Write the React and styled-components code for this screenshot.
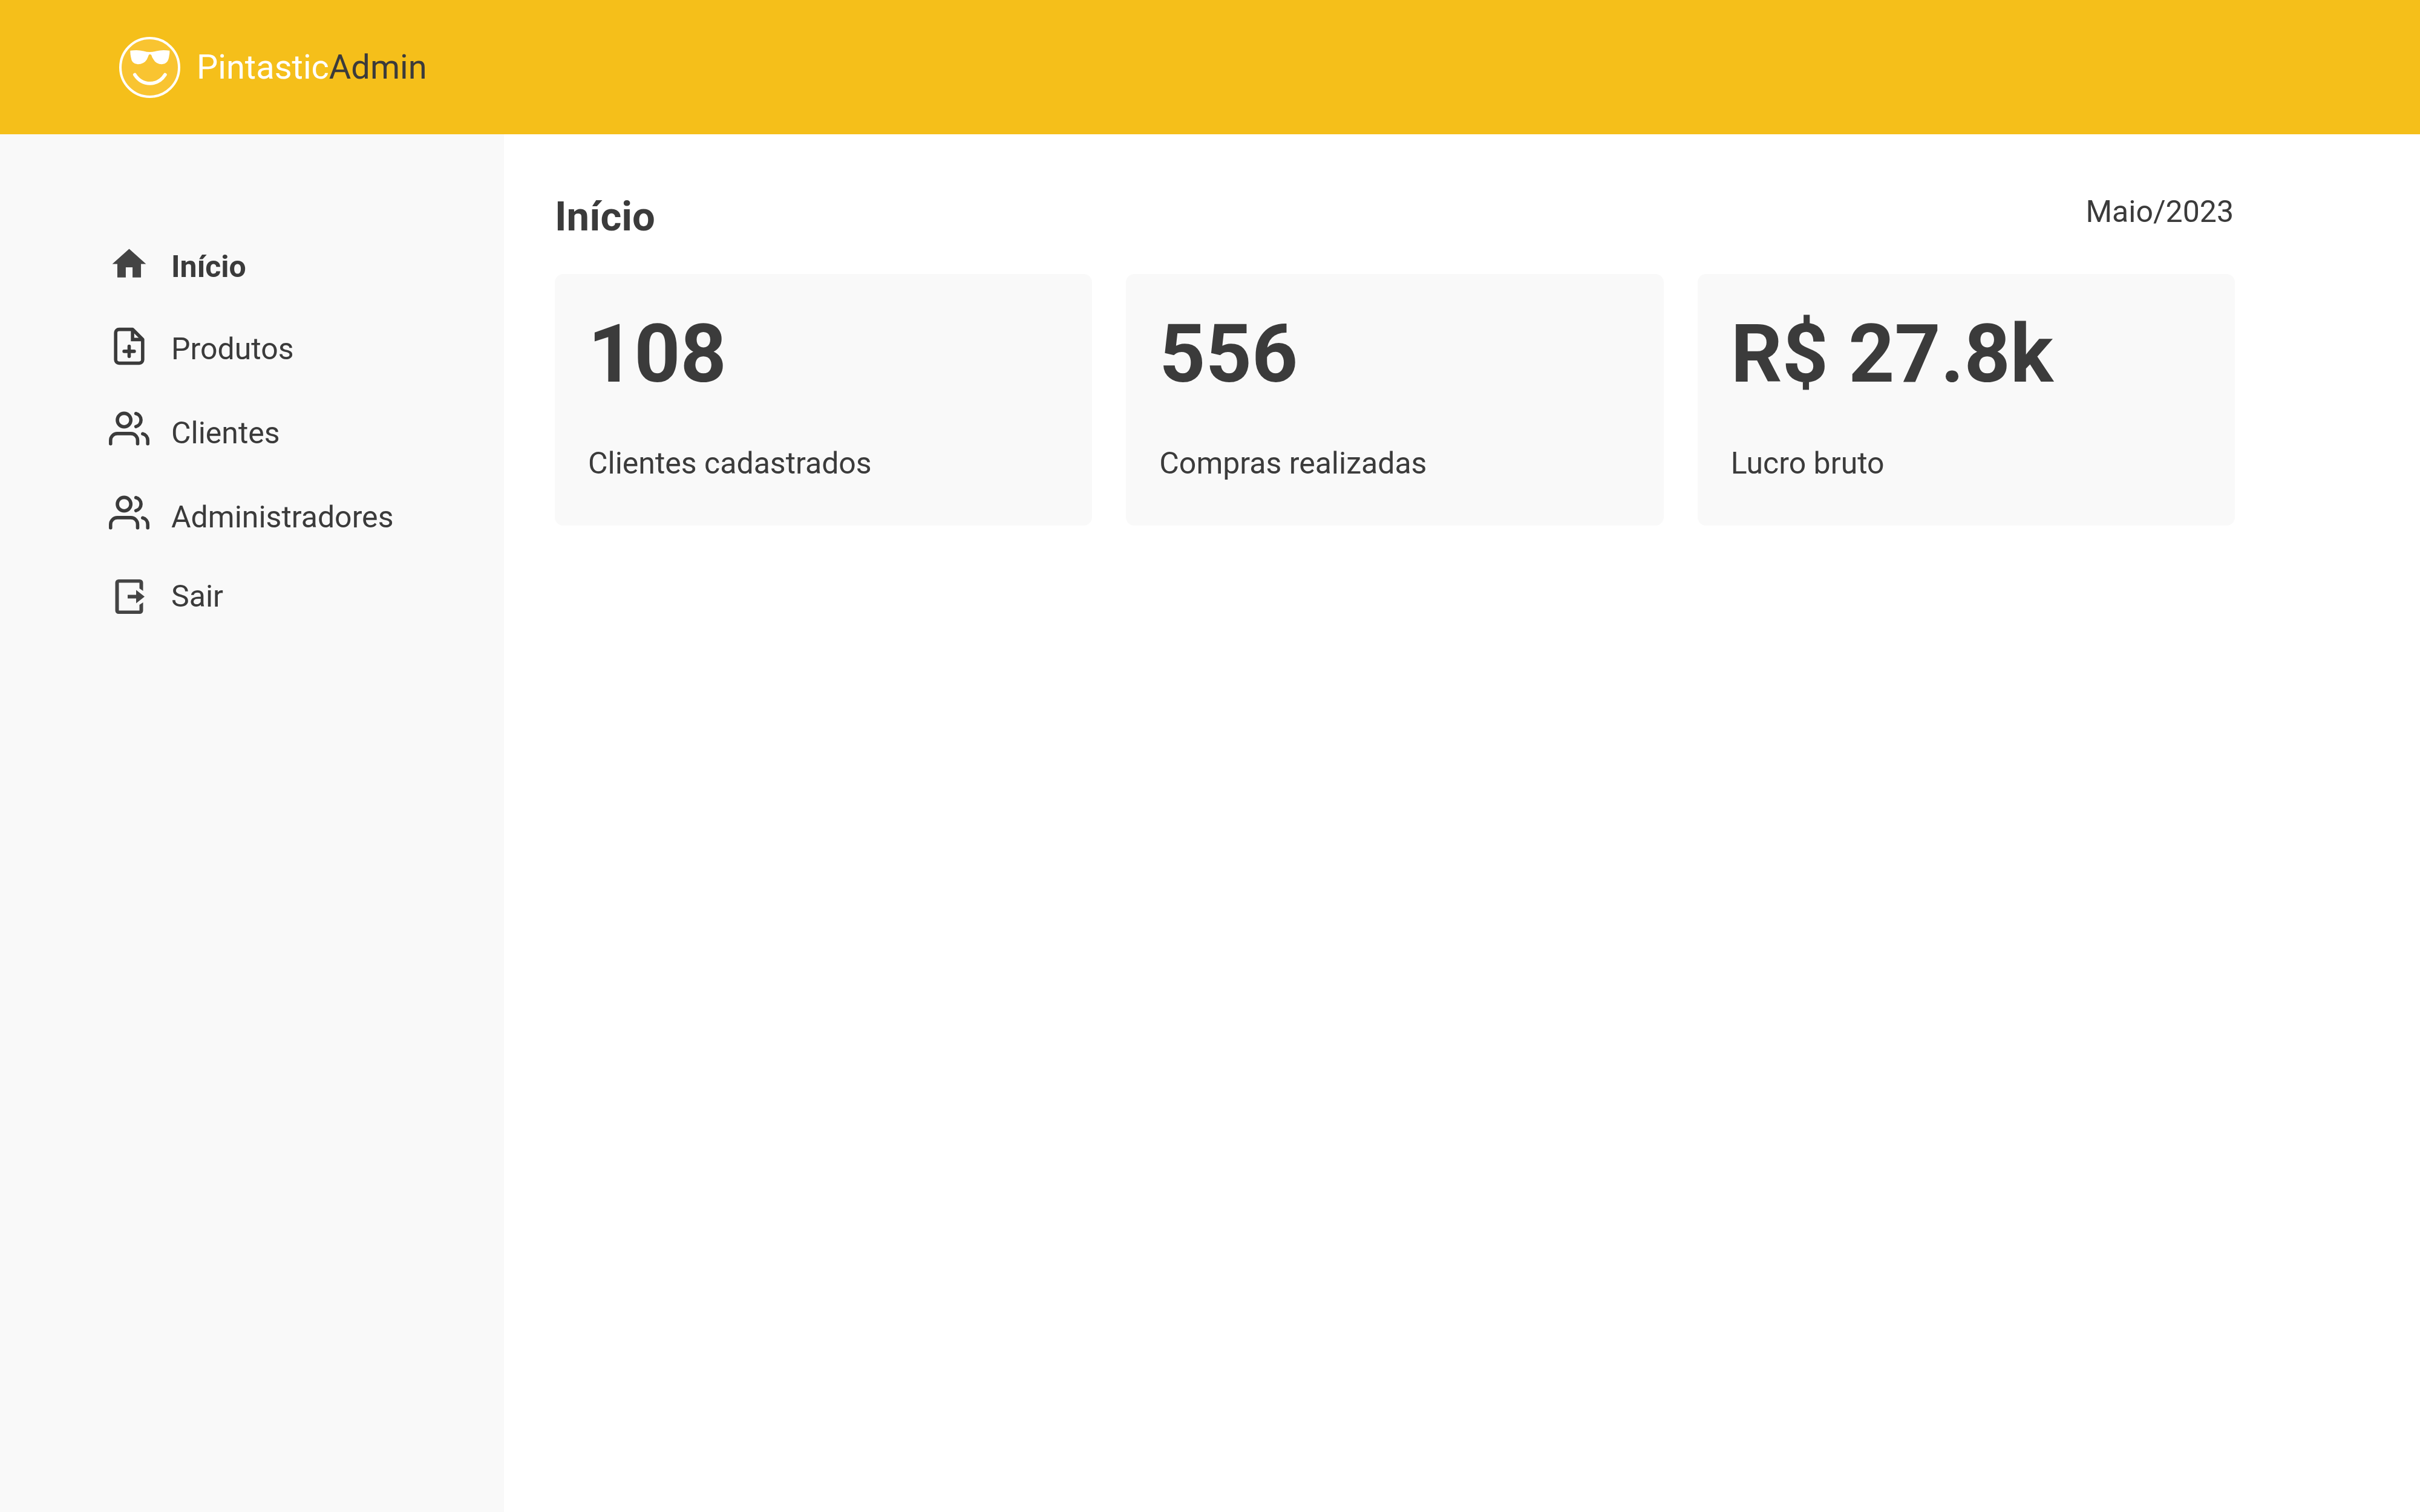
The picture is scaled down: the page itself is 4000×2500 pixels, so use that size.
import React from "react";
import styled, { createGlobalStyle } from "styled-components";
import { FiUsers } from "react-icons/fi";

const color = {
  brand: "#f5bf1a",
  ink: "#3b3b3b",
  panel: "#f9f9f9",
  page: "#ffffff",
};

const GlobalStyle = createGlobalStyle`
  * { box-sizing: border-box; }
  body {
    margin: 0;
    background: ${color.page};
    color: ${color.ink};
    font-family: Roboto, "Open Sans", sans-serif;
    font-size: 50px;
    line-height: 59px;
  }
`;

const Page = styled.div`
  display: flex;
  flex-direction: column;
  min-height: 100vh;
`;

const Header = styled.header`
  display: flex;
  align-items: center;
  height: 222px;
  padding: 0 197px;
  background: ${color.brand};
`;

const Brand = styled.a`
  display: flex;
  align-items: center;
  gap: 27px;
  color: ${color.ink};
  font-size: 56px;
  line-height: 66px;
  text-decoration: none;
`;

const BrandAccent = styled.span`
  color: #ffffff;
`;

const Body = styled.div`
  display: flex;
  flex: 1;
`;

const Sidebar = styled.nav`
  flex: 0 0 833px;
  padding: 181px 56px 56px 180px;
  background: ${color.panel};
`;

const Menu = styled.ul`
  display: flex;
  flex-direction: column;
  gap: 69px;
  margin: 0;
  padding: 0;
  list-style: none;
`;

const MenuLink = styled.a`
  display: flex;
  align-items: flex-start;
  gap: 36px;
  min-height: ${(p) => (p.$tall ? "70px" : "67px")};
  color: inherit;
  font-weight: ${(p) => (p.$active ? 700 : 400)};
  text-decoration: none;

  svg {
    flex: none;
    width: 67px;
    height: 67px;
  }
`;

const MenuLabel = styled.span`
  align-self: ${(p) => p.$align};
  line-height: 57px;
`;

const Main = styled.main`
  flex: 1;
  min-width: 0;
  padding: 97px 306px 97px 84px;
`;

const TitleBar = styled.div`
  display: flex;
  align-items: flex-start;
  justify-content: space-between;
  margin-bottom: 55px;
`;

const Title = styled.h1`
  margin: 0;
  font-size: 67px;
  line-height: 79px;
  font-weight: 700;
`;

const Period = styled.time`
  padding-right: 2px;
  line-height: 62px;
`;

const Cards = styled.section`
  display: grid;
  grid-template-columns: repeat(3, 1fr);
  gap: 56px;
`;

const Card = styled.article`
  display: flex;
  flex-direction: column;
  gap: 73px;
  padding: 55px 55px 73px;
  border-radius: 14px;
  background: ${color.panel};
`;

const CardValue = styled.strong`
  font-size: 133px;
  line-height: 156px;
  font-weight: 700;
`;

const CardLabel = styled.span`
  font-weight: 400;
`;

function Logo() {
  return (
    <svg width="101" height="101" viewBox="21 33 302 302" aria-hidden="true">
      <circle cx="172" cy="184" r="145" fill="#f9c431" stroke="#fff" strokeWidth="12" />
      <path
        fill="#fff"
        d="M76 101 Q112 95 142 103 Q157 108 173 108 Q189 108 204 103 Q234 95 270 101 Q271 114 268 126 Q264 168 231 168 Q204 168 190 144 Q183 134 181 125 Q178 119 173 119 Q168 119 166 125 Q163 134 157 146 Q143 168 113 168 Q83 168 79 134 Q75 116 76 101 Z"
      />
      <path d="M98 220 Q126 263 173 263 Q220 263 248 220" fill="none" stroke="#fff" strokeWidth="17" strokeLinecap="round" />
    </svg>
  );
}

function HomeIcon() {
  return (
    <svg viewBox="0 0 24 24" fill="#444444" aria-hidden="true">
      <path d="M10 20v-6h4v6h5v-8h3L12 3 2 12h3v8z" />
    </svg>
  );
}

function FilePlusIcon() {
  return (
    <svg viewBox="0 0 24 24" fill="none" stroke="currentColor" strokeWidth="2" aria-hidden="true">
      <path d="M14 2H6a2 2 0 0 0-2 2v16a2 2 0 0 0 2 2h12a2 2 0 0 0 2-2V8z" strokeLinejoin="round" />
      <path d="M14 2v6h6" />
      <path d="M12 12v6M9 15h6" strokeLinecap="round" />
    </svg>
  );
}

function ExitIcon() {
  return (
    <svg viewBox="0 0 67 67" fill="#444444" aria-hidden="true">
      <path d="M16 5H51a5.500 5.500 0 0 1 5.500 5.500V24L50.500 20V10.500H16.500V56.500H50.500V47L56.500 43V56.500a5.500 5.500 0 0 1-5.500 5.500H16a5.500 5.500 0 0 1-5.500-5.500V10.500A5.500 5.500 0 0 1 16 5Z" />
      <path d="M31 30.500H45V22.500L59 33.500 45 44.500V36.500H31Z" />
    </svg>
  );
}

const menu = [
  { label: "Início", icon: HomeIcon, align: "flex-end", active: true },
  { label: "Produtos", icon: FilePlusIcon, align: "flex-end" },
  { label: "Clientes", icon: FiUsers, align: "flex-end", tall: true },
  { label: "Administradores", icon: FiUsers, align: "flex-end", tall: true },
  { label: "Sair", icon: ExitIcon, align: "center" },
];

const cards = [
  { value: "108", label: "Clientes cadastrados" },
  { value: "556", label: "Compras realizadas" },
  { value: "R$ 27.8k", label: "Lucro bruto" },
];

export default function App() {
  return (
    <>
      <GlobalStyle />
      <Page>
        <Header>
          <Brand href="#">
            <Logo />
            <span>
              <BrandAccent>Pintastic</BrandAccent>Admin
            </span>
          </Brand>
        </Header>
        <Body>
          <Sidebar>
            <Menu>
              {menu.map(({ label, icon: Icon, align, active, tall }) => (
                <li key={label}>
                  <MenuLink href="#" $active={active} $tall={tall} aria-current={active ? "page" : undefined}>
                    <Icon />
                    <MenuLabel $align={align}>{label}</MenuLabel>
                  </MenuLink>
                </li>
              ))}
            </Menu>
          </Sidebar>
          <Main>
            <TitleBar>
              <Title>Início</Title>
              <Period dateTime="2023-05">Maio/2023</Period>
            </TitleBar>
            <Cards>
              {cards.map(({ value, label }) => (
                <Card key={label}>
                  <CardValue>{value}</CardValue>
                  <CardLabel>{label}</CardLabel>
                </Card>
              ))}
            </Cards>
          </Main>
        </Body>
      </Page>
    </>
  );
}
